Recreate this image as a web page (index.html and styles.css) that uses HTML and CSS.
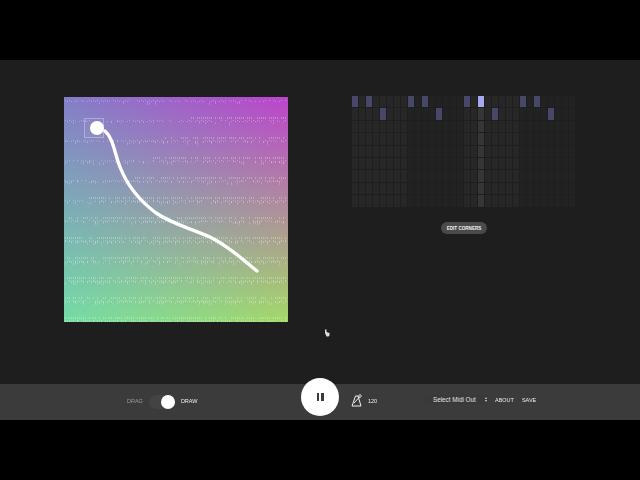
FILE: index.html
```html
<!DOCTYPE html>
<html lang="en">
<head>
<meta charset="utf-8">
<title>Corners</title>
<link rel="stylesheet" href="styles.css">
</head>
<body>
<div class="letterbox"></div>
<main class="stage">
  <div class="pad">
    <canvas id="texture" class="texture" width="224" height="225"></canvas>
    <svg class="overlay" width="224" height="225" viewBox="0 0 224 225">
      <rect x="20.5" y="21.5" width="19" height="19" class="handle-box"/>
      <path class="stroke" d="M41 34C49 41 50 54 56 70C63 88 76 104 92 116C108 127 126 131 146 140C166 150 178 162 193 174"/>
      <circle cx="33" cy="31" r="7" class="handle"/>
    </svg>
  </div>
  <section class="right">
    <div id="grid" class="grid"></div>
    <button class="edit">EDIT CORNERS</button>
  </section>
  <svg class="cursor" width="6" height="8" viewBox="0 0 6 8"><path d="M1 0.500L2.500 0.500L2.500 3L5.500 4L5.500 6.500L4.500 7.500L2.500 7.500L1 4Z" fill="#dcdcdc"/></svg>
</main>
<footer class="bar">
  <div class="mode">
    <span class="label dim">DRAG</span>
    <span class="switch"><span class="knob"></span></span>
    <span class="label">DRAW</span>
  </div>
  <button class="play" aria-label="Pause"><span class="pause"></span><span class="pause"></span></button>
  <div class="tempo">
    <svg width="12" height="13" viewBox="0 0 12 13"><path d="M4.500 2L7 2L10 12L1 12Z M3 9L8.500 3" fill="none" stroke="#f0f0f0" stroke-width="1"/><circle cx="9" cy="2" r="1.300" fill="none" stroke="#f0f0f0" stroke-width="0.800"/></svg>
    <span class="label">120</span>
  </div>
  <div class="actions">
    <div class="select"><span>Select Midi Out</span><span class="arrows"><i></i><i class="down"></i></span></div>
    <span class="label">ABOUT</span>
    <span class="label">SAVE</span>
  </div>
</footer>
<div class="letterbox"></div>
<script src="app.js"></script>
</body>
</html>
```
FILE: styles.css
```css
* { box-sizing: border-box; }
html, body { margin: 0; height: 100%; background: #000; overflow: hidden; }
body { font-family: "Liberation Sans", Arial, sans-serif; color: #eee; display: flex; flex-direction: column; width: 640px; height: 480px; }
.letterbox { height: 60px; background: #000; flex: none; }
.stage { position: relative; height: 324px; flex: none; background: #1e1e1e; display: flex; align-items: flex-start; padding: 37px 0 0 64px; }
.pad { position: relative; width: 224px; height: 225px; flex: none; }
.texture { display: block; width: 224px; height: 225px; filter: blur(0.4px); }
.overlay { position: absolute; left: 0; top: 0; }
.handle-box { fill: rgba(255,255,255,0.04); stroke: rgba(255,255,255,0.3); stroke-width: 1; }
.handle { fill: #fff; }
.stroke { fill: none; stroke: #fff; stroke-width: 3.4; stroke-linecap: round; }
.right { margin: -1px 0 0 64px; width: 224px; display: flex; flex-direction: column; align-items: center; }
.grid { display: grid; grid-template-columns: repeat(32, 6px); grid-auto-rows: 11.4px; column-gap: 1px; row-gap: 1px; width: 224px; height: 112px; }
.cell { background: #272727; }
.cell.alt { background: #222; }
.cell.current { background: #363636; }
.cell.on { background: #47476a; }
.cell.on.current { background: #a6a8f0; }
.edit { margin-top: 14px; width: 46px; height: 12px; padding: 0; border: 0; border-radius: 6px; background: #4a4a4a; color: #f0f0f0; font: bold 4.6px "Liberation Sans", Arial, sans-serif; white-space: nowrap; }
.cursor { position: absolute; left: 324px; top: 269px; }
.bar { position: relative; height: 36px; flex: none; background: #3b3b3b; display: flex; align-items: center; padding: 0 104px 0 127px; }
.label { font-size: 5.500px; line-height: 8px; color: #eee; white-space: nowrap; position: relative; top: -1px; will-change: opacity; }
.dim { color: #9a9a9a; }
.mode { display: flex; align-items: center; }
.switch { width: 26px; height: 14px; margin: 0 6px; border-radius: 7px; background: #434343; display: flex; justify-content: flex-end; }
.knob { width: 14px; height: 14px; border-radius: 50%; background: #fff; }
.play { position: absolute; left: 301px; top: -6px; width: 38px; height: 38px; border: 0; padding: 0; border-radius: 50%; background: #fff; display: flex; align-items: center; justify-content: center; gap: 2px; }
.pause { width: 2.500px; height: 8px; background: #3a3a3a; }
.tempo { position: absolute; left: 351px; top: 10px; display: flex; align-items: center; gap: 5px; }
.tempo .label { top: 0; }
.actions { position: absolute; left: 424px; top: 11px; display: flex; align-items: center; gap: 8px; }
.actions .label { top: 0; }
.select { width: 64px; height: 9px; background: #393939; color: #e4e4e4; font-size: 6.300px; line-height: 8px; display: flex; align-items: center; justify-content: space-between; padding: 0 1px 0 9px; margin-right: -1px; white-space: nowrap; will-change: opacity; }
.arrows { display: flex; flex-direction: column; gap: 1px; }
.arrows i { display: block; width: 0; height: 0; border-left: 1.500px solid transparent; border-right: 1.500px solid transparent; border-bottom: 2px solid #ddd; }
.arrows i.down { border-bottom: 0; border-top: 2px solid #ddd; }
```
FILE: app.js
```js
(function () {
  var ROWS = 9, COLS = 32;
  var ON = { "0,0":1, "0,2":1, "0,8":1, "0,10":1, "0,16":1, "0,18":1, "0,24":1, "0,26":1, "1,4":1, "1,12":1, "1,20":1, "1,28":1 };
  var grid = document.getElementById("grid");
  for (var r = 0; r < ROWS; r++) {
    for (var c = 0; c < COLS; c++) {
      var d = document.createElement("div");
      var cls = "cell";
      if (Math.floor(c / 8) % 2 === 1) cls += " alt";
      if (c === 18) cls += " current";
      if (ON[r + "," + c]) cls += " on";
      d.className = cls;
      grid.appendChild(d);
    }
  }

  var cv = document.getElementById("texture");
  var ctx = cv.getContext("2d");
  var W = cv.width, H = cv.height;
  var img = ctx.createImageData(W, H);
  var TL = [132, 126, 200], TR = [188, 68, 204], BL = [116, 220, 166], BR = [164, 216, 104];
  for (var y = 0; y < H; y++) {
    var v = y / (H - 1);
    for (var x = 0; x < W; x++) {
      var u = x / (W - 1);
      var i = (y * W + x) * 4;
      for (var k = 0; k < 3; k++) {
        var a = TL[k] + (TR[k] - TL[k]) * u;
        var b = BL[k] + (BR[k] - BL[k]) * u;
        img.data[i + k] = a + (b - a) * v;
      }
      img.data[i + 3] = 255;
    }
  }
  ctx.putImageData(img, 0, 0);

  var seed = 7;
  function rnd() { seed = (seed * 16807) % 2147483647; return seed / 2147483647; }
  // Start of the dotted upper line, row by row: it reaches further left lower down.
  var upperFrom = [999, 126, 100, 86, 66, 22, 0, 0, 0, 0, 0, 0];
  for (var row = 0; row < 12; row++) {
    var ry = 3 + row * 20;
    var depth = row / 11;
    for (var px = 1; px < W - 1; px += 2) {
      // main zig-zag line
      if (rnd() < 0.72) {
        ctx.fillStyle = "rgba(255,255,255,0.3)";
        ctx.fillRect(px, ry + (px % 4 === 1 ? 0 : 1), 1, 1 + (rnd() < depth ? 1 : 0));
      }
      // upper line of ticks
      if (px >= upperFrom[row] && rnd() < 0.7) {
        ctx.fillStyle = "rgba(255,255,255,0.26)";
        ctx.fillRect(px, ry - 3, 1, 2);
      }
      // lower ticks, more of them towards the bottom
      if (rnd() < 0.08 + depth * 0.45) {
        ctx.fillStyle = "rgba(255,255,255,0.2)";
        ctx.fillRect(px, ry + 2, 1, 1 + Math.floor(rnd() * 3));
      }
    }
  }
})();
```
